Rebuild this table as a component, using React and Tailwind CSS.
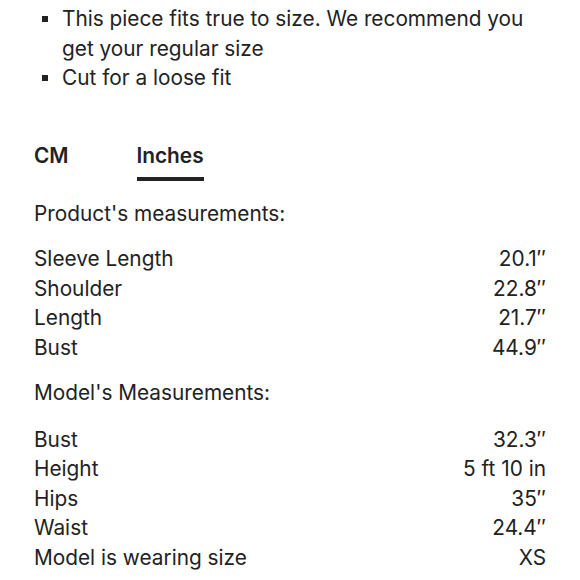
import React from 'react';

const product = [
  ['Sleeve Length', '20.1″'],
  ['Shoulder', '22.8″'],
  ['Length', '21.7″'],
  ['Bust', '44.9″'],
];

const model = [
  ['Bust', '32.3″'],
  ['Height', '5 ft 10 in'],
  ['Hips', '35″'],
  ['Waist', '24.4″'],
  ['Model is wearing size', 'XS'],
];

function Rows({ rows }) {
  return (
    <div className="flex flex-col">
      {rows.map(([label, value]) => (
        <div key={label} className="flex justify-between leading-[29.5px]">
          <span>{label}</span>
          <span>{value}</span>
        </div>
      ))}
    </div>
  );
}

export default function App() {
  return (
    <div
      className="w-[580px] h-[580px] overflow-hidden bg-white text-[#222] text-[20.8px] px-[34px]"
      style={{ fontFamily: 'Inter, "Noto Sans", sans-serif' }}
    >
      {/* Fit notes */}
      <ul className="pt-[4px] leading-[29.5px]">
        <li className="flex">
          <span className="w-[28px] shrink-0 flex pl-[8px] pt-[12px]">
            <span className="w-[6px] h-[6px] bg-[#222]" />
          </span>
          <span>This piece fits true to size. We recommend you get your regular size</span>
        </li>
        <li className="flex">
          <span className="w-[28px] shrink-0 flex pl-[8px] pt-[12px]">
            <span className="w-[6px] h-[6px] bg-[#222]" />
          </span>
          <span>Cut for a loose fit</span>
        </li>
      </ul>

      {/* Unit tabs */}
      <div className="flex gap-[68px] mt-[48px] font-semibold">
        <div className="leading-[29px]">CM</div>
        <div className="flex flex-col">
          <span className="leading-[29px]">Inches</span>
          <span className="mt-[7px] h-[4px] bg-[#222]" />
        </div>
      </div>

      <div className="mt-[18px] leading-[29.5px]">Product's measurements:</div>
      <div className="mt-[16px]">
        <Rows rows={product} />
      </div>

      <div className="mt-[16px] leading-[29.5px]">Model's Measurements:</div>
      <div className="mt-[17px]">
        <Rows rows={model} />
      </div>
    </div>
  );
}
